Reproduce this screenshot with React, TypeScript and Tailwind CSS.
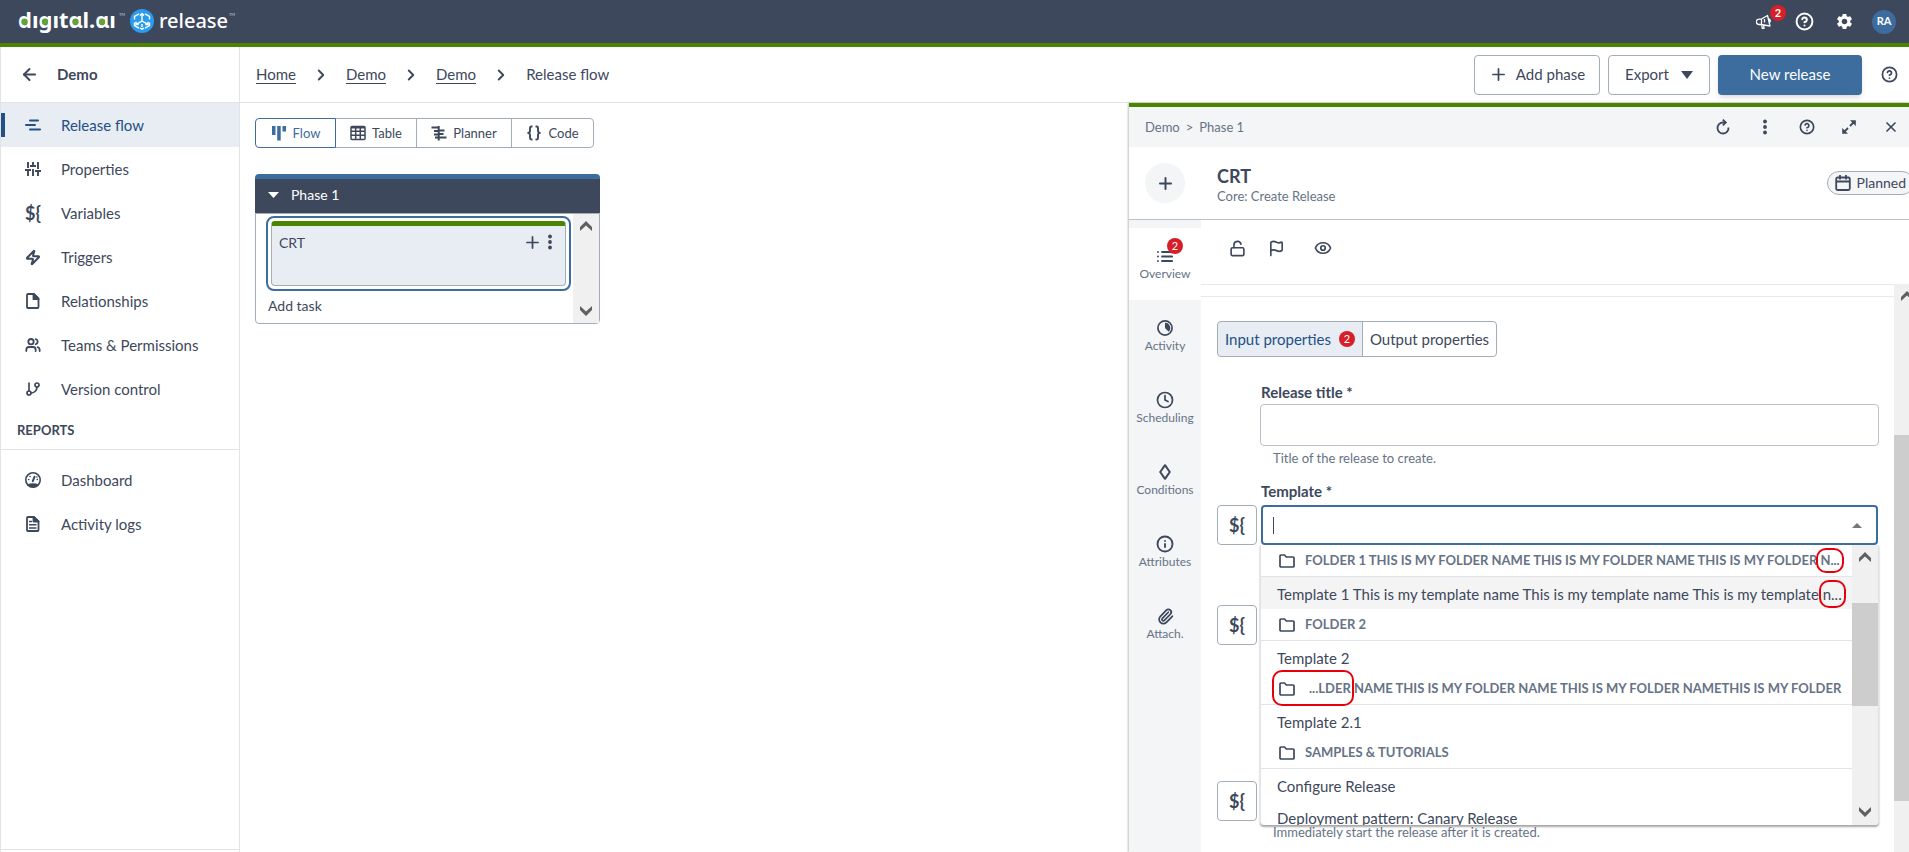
import React from 'react';
import clsx from 'clsx';
import {
  ArrowLeft,
  ChevronRight,
  CircleHelp,
  Eye,
  Flag,
  GitBranch,
  Info,
  Clock,
  LockOpen,
  Paperclip,
  Plus,
  Users,
  X,
  Zap,
} from 'lucide-react';
import { MdSettings } from 'react-icons/md';

type IconProps = { className?: string };

/* ---------- icons ---------- */

const FlowIcon = ({ className = 'size-4' }: IconProps) => (
  <svg viewBox="0 0 16 16" className={className} fill="none" stroke="currentColor" strokeWidth="2" strokeLinecap="round" aria-hidden="true">
    <path d="M5 3.5h8M1 8h9M5 12.5h10" />
  </svg>
);

const SlidersIcon = ({ className = 'size-4' }: IconProps) => (
  <svg viewBox="0 0 16 16" className={className} fill="none" stroke="currentColor" strokeWidth="1.9" aria-hidden="true">
    <path d="M3 1v6M0 9h6M3 9v6M8 1v4M5 5h6M8 8v7M13 1v7M10 10h6M13 10v5" />
  </svg>
);

const VariableIcon = () => (
  <span className="w-4 text-center text-lg leading-4 font-bold" aria-hidden="true">{'${'}</span>
);

const FileIcon = ({ className = 'size-4' }: IconProps) => (
  <svg viewBox="0 0 16 16" className={className} fill="none" stroke="currentColor" strokeWidth="1.8" strokeLinejoin="round" aria-hidden="true">
    <path d="M2 2v12a1 1 0 0 0 1 1h9.500a1 1 0 0 0 1-1V5.500L9 1H3a1 1 0 0 0-1 1z" />
    <path d="M8.500 1v5.200h5z" fill="currentColor" />
  </svg>
);

const LogIcon = ({ className = 'size-4' }: IconProps) => (
  <svg viewBox="0 0 16 16" className={className} fill="none" stroke="currentColor" strokeWidth="1.8" strokeLinejoin="round" aria-hidden="true">
    <path d="M2 2v12a1 1 0 0 0 1 1h9.500a1 1 0 0 0 1-1V5.500L9 1H3a1 1 0 0 0-1 1z" />
    <path d="M8.500 1v4.500h5z" fill="currentColor" />
    <path d="M4 5.500h3M4 8.800h7.500M4 12h7.500" strokeWidth="1.4" />
  </svg>
);

const GaugeIcon = ({ className = 'size-4' }: IconProps) => (
  <svg viewBox="0 0 16 16" className={className} fill="none" stroke="currentColor" strokeWidth="1.6" strokeLinecap="round" aria-hidden="true">
    <circle cx="8" cy="8" r="7.200" />
    <path d="M3.300 13c1.500-1.300 7.900-1.300 9.400 0-2.300 2.200-7.100 2.200-9.400 0z" fill="currentColor" />
    <path d="M7.800 9.200 9.500 4.800" strokeWidth="2" />
    <path d="M3.600 7.500h.2M12.200 7.500h.2M5 4.500h.2M11.800 5h.1" strokeWidth="1.5" />
  </svg>
);

const KanbanIcon = ({ className = 'size-4' }: IconProps) => (
  <svg viewBox="0 0 16 16" className={className} fill="currentColor" aria-hidden="true">
    <path d="M1 1h3.500v9H1zM6.200 1h3.500v14.500H6.200zM11.500 1H15v5.500h-3.500z" />
  </svg>
);

const TableIcon = ({ className = 'size-4' }: IconProps) => (
  <svg viewBox="0 0 16 16" className={className} fill="none" stroke="currentColor" strokeWidth="1.5" aria-hidden="true">
    <rect x="1" y="1.500" width="14" height="13" rx="1" />
    <path d="M1 2.500h14" strokeWidth="2" />
    <path d="M1 6.300h14M1 10.300h14M5.700 2v12.500M10.300 2v12.500" />
  </svg>
);

const PlannerIcon = ({ className = 'size-4' }: IconProps) => (
  <svg viewBox="0 0 16 16" className={className} fill="none" stroke="currentColor" strokeWidth="2" aria-hidden="true">
    <path d="M.5 2.500H7M3 6h5M3 9.500h5M8 5.500h5.500M8 9h4.500M8 12.500h7.500M4 12.500h3" />
    <path d="M7.700 1v14.500" />
  </svg>
);

const BracesIcon = ({ className = 'size-4' }: IconProps) => (
  <svg viewBox="0 0 16 16" className={className} fill="none" stroke="currentColor" strokeWidth="1.900" aria-hidden="true">
    <path d="M6.500 1.500H5.300Q4 1.500 4 3v3Q4 7.700 1.500 7.900 4 8.200 4 9.700V13q0 1.500 1.300 1.500h1.200M9.500 1.500h1.200Q12 1.500 12 3v3q0 1.700 2.500 1.900Q12 8.200 12 9.700V13q0 1.500-1.300 1.500H9.500" />
  </svg>
);

const MegaphoneIcon = ({ className = 'size-4' }: IconProps) => (
  <svg viewBox="0 0 16 16" className={className} fill="none" stroke="currentColor" strokeWidth="1.300" strokeLinejoin="round" aria-hidden="true">
    <path d="M5 5.200 11.500 1.500 14 12 5 10.500H3a2.600 2.600 0 0 1 0-5.300zM5.500 5v5.500M5.500 10.700l.8 3.600h1.800l-.6-3.200M8.500 5v3.500M13 4.700q1.800 1 1 3.600" />
  </svg>
);

const RefreshIcon = ({ className = 'size-4' }: IconProps) => (
  <svg viewBox="0 0 16 16" className={className} fill="none" stroke="currentColor" strokeWidth="1.800" aria-hidden="true">
    <path d="M13.500 8.500a5.500 5.500 0 1 1-5.500-5h2.500" />
    <path d="M7.800.7 10.800 3.500 7.800 6.300" />
  </svg>
);

const KebabIcon = ({ className = 'size-4' }: IconProps) => (
  <svg viewBox="0 0 16 16" className={className} fill="currentColor" aria-hidden="true">
    <circle cx="8" cy="2.500" r="1.900" />
    <circle cx="8" cy="8" r="1.900" />
    <circle cx="8" cy="13.500" r="1.900" />
  </svg>
);

const ExpandIcon = ({ className = 'size-4' }: IconProps) => (
  <svg viewBox="0 0 16 16" className={className} fill="currentColor" stroke="currentColor" aria-hidden="true">
    <path d="M9 1.200h5.800V7zM1.200 9v5.800H7z" stroke="none" />
    <path d="m9 7 4-4M7 9l-4 4" strokeWidth="1.800" />
  </svg>
);

const ListIcon = ({ className = 'size-4' }: IconProps) => (
  <svg viewBox="0 0 16 16" className={className} fill="none" stroke="currentColor" strokeWidth="1.800" strokeLinecap="round" aria-hidden="true">
    <path d="M5 4h10.200M5 8.500h10.200M5 13h10.200M.9 4H1M.9 8.500H1M.9 13H1" />
  </svg>
);

const ActivityIcon = ({ className = 'size-4' }: IconProps) => (
  <svg viewBox="0 0 16 16" className={className} fill="none" stroke="currentColor" strokeWidth="1.700" aria-hidden="true">
    <circle cx="8" cy="8" r="7.100" />
    <path d="M8 2.800A5.200 5.200 0 0 1 11.700 11.700L8 8z" fill="currentColor" stroke="none" />
  </svg>
);

const ConditionIcon = ({ className = 'size-4' }: IconProps) => (
  <svg viewBox="0 0 16 16" className={className} fill="none" stroke="currentColor" strokeWidth="2" strokeLinejoin="round" aria-hidden="true">
    <path d="M8 1.200 12.800 8 8 14.800 3.200 8z" />
  </svg>
);

const FolderIcon = ({ className = 'size-4' }: IconProps) => (
  <svg viewBox="0 0 16 16" className={className} fill="none" stroke="currentColor" strokeWidth="1.700" strokeLinejoin="round" aria-hidden="true">
    <path d="M1 3a1 1 0 0 1 1-1h3.500l1.800 2H14a1 1 0 0 1 1 1v8a1 1 0 0 1-1 1H2a1 1 0 0 1-1-1z" />
  </svg>
);

const CalendarIcon = ({ className = 'size-4' }: IconProps) => (
  <svg viewBox="0 0 16 16" className={className} fill="none" stroke="currentColor" strokeWidth="1.800" aria-hidden="true">
    <rect x="1.200" y="2.500" width="13.600" height="12.500" rx="1.500" />
    <path d="M1.500 6.500h13M5 0v4.500M11 0v4.500" />
  </svg>
);

const CaretDown = ({ className }: IconProps) => (
  <svg viewBox="0 0 12 8" preserveAspectRatio="none" className={className} fill="currentColor" aria-hidden="true">
    <path d="M0 0h12L6 8z" />
  </svg>
);

const ScrollArrow = ({ className }: IconProps) => (
  <svg viewBox="0 0 12 10" className={clsx('h-[10px] w-3 shrink-0 text-[#606060]', className)} fill="currentColor" aria-hidden="true">
    <path d="M6 0 12 6v4L6 4.500 0 10V6z" />
  </svg>
);

const Count = ({ value, className }: { value: number; className?: string }) => (
  <span className={clsx('flex size-4 items-center justify-center rounded-full bg-[#d61f26] text-[11px] leading-4 text-white', className)}>
    {value}
  </span>
);

/* ---------- header ---------- */

const Logo = () => (
  <svg viewBox="0 0 220 40" className="h-10 w-[220px]" role="img" aria-label="digital.ai release">
    <text x="0" y="26" fill="#fff" fontFamily="'Noto Sans', sans-serif" fontSize="22" fontWeight="700">dıgıtɑl.ɑı</text>
    <g fill="#64a338">
      <circle cx="6.500" cy="19.800" r="3.200" />
      <circle cx="27" cy="19.800" r="3.200" />
      <circle cx="57.500" cy="19.800" r="3.200" />
      <circle cx="84" cy="19.800" r="3.200" />
    </g>
    <circle cx="124" cy="19" r="12" fill="#2b9ced" />
    <g fill="none" stroke="#fff" strokeWidth="1.400">
      <path d="M124 12v7l-5.500 3.200M124 19l5.500 3.200M122 13.500l2-2 2 2M118 19.800v2.700h2.700M130 19.800v2.700h-2.700" />
      <path d="M121 11.800l-4.500 2.600v3.200M127 11.800l4.500 2.600v3.200M116.500 20.500v3.100l4.500 2.600M131.500 20.500v3.100l-4.500 2.600M122 26l2 1.200 2-1.200M124 22v3" />
    </g>
    <text x="141" y="26" fill="#fff" fontFamily="'Noto Sans', sans-serif" fontSize="20" fontWeight="500">release</text>
    <text x="101" y="14" fill="#c5cbd3" fontFamily="Lato, sans-serif" fontSize="4">TM</text>
    <text x="211" y="14" fill="#c5cbd3" fontFamily="Lato, sans-serif" fontSize="4">TM</text>
  </svg>
);

const Header = () => (
  <header className="flex h-[47px] shrink-0 items-center justify-between border-b-4 border-[#498500] bg-[#3d485c] pr-[13px] pl-[18px] text-white">
    <Logo />
    <div className="flex items-center gap-4">
      <button aria-label="Announcements" className="relative flex size-6 items-center justify-center">
        <MegaphoneIcon />
        <Count value={2} className="absolute -top-[5px] left-[18px] font-bold" />
      </button>
      <button aria-label="Help" className="flex size-6 items-center justify-center">
        <CircleHelp size={19} strokeWidth={2.5} />
      </button>
      <button aria-label="Settings" className="flex size-6 items-center justify-center">
        <MdSettings size={19} />
      </button>
      <button aria-label="Account" className="flex size-6 items-center justify-center rounded-full bg-[#3d6c9e] text-[11px] font-bold">
        RA
      </button>
    </div>
  </header>
);

/* ---------- sidebar ---------- */

const mainItems = [
  { label: 'Release flow', icon: <FlowIcon />, active: true },
  { label: 'Properties', icon: <SlidersIcon /> },
  { label: 'Variables', icon: <VariableIcon /> },
  { label: 'Triggers', icon: <Zap size={17} strokeWidth={3} /> },
  { label: 'Relationships', icon: <FileIcon /> },
  { label: 'Teams & Permissions', icon: <Users size={18} strokeWidth={2.7} /> },
  { label: 'Version control', icon: <GitBranch size={20} strokeWidth={2.5} /> },
];

const reportItems = [
  { label: 'Dashboard', icon: <GaugeIcon /> },
  { label: 'Activity logs', icon: <LogIcon /> },
];

const NavItem = ({ label, icon, active }: { label: string; icon: React.ReactNode; active?: boolean }) => (
  <li>
    <a href="#" className={clsx('flex h-11 items-center text-[15px]', active && 'bg-[#e8edf3] text-[#235086]')}>
      <span className={clsx('h-6 w-1', active && 'bg-[#235086]')} />
      <span className="ml-5 flex w-4 justify-center">{icon}</span>
      <span className="ml-5">{label}</span>
    </a>
  </li>
);

const Sidebar = () => (
  <nav className="flex w-60 shrink-0 flex-col border-x border-[#e1e3e8]">
    <div className="flex h-14 shrink-0 items-center border-b border-[#e1e3e8] pl-[19px]">
      <a href="#" aria-label="Back"><ArrowLeft size={19} strokeWidth={2.5} /></a>
      <span className="ml-[18px] text-[15px] font-bold">Demo</span>
    </div>
    <ul>
      {mainItems.map((item) => <NavItem key={item.label} {...item} />)}
    </ul>
    <h2 className="h-[39px] border-b border-[#e1e3e8] pl-4 text-[13px] leading-[39px] font-bold">REPORTS</h2>
    <ul className="mt-2">
      {reportItems.map((item) => <NavItem key={item.label} {...item} />)}
    </ul>
    <div className="mt-auto mb-[2px] border-b border-[#e1e3e8]" />
  </nav>
);

/* ---------- release flow ---------- */

const Toolbar = () => (
  <div className="flex h-14 shrink-0 items-center justify-between border-b border-[#e1e3e8] pr-[11px] pl-4 text-[15px]">
    <nav aria-label="Breadcrumb" className="flex items-center">
      {['Home', 'Demo', 'Demo'].map((crumb, i) => (
        <React.Fragment key={i}>
          <a href="#" className="border-b border-current leading-[18px]">{crumb}</a>
          <ChevronRight size={18} strokeWidth={2.5} className="mx-4" />
        </React.Fragment>
      ))}
      <span>Release flow</span>
    </nav>
    <div className="flex items-center gap-2">
      <button className="flex h-10 w-[126px] items-center justify-center gap-2 rounded-[4px] border border-[#a3adb8]">
        <Plus size={19} strokeWidth={2.2} />
        Add phase
      </button>
      <button className="flex h-10 w-[102px] items-center justify-center gap-3 rounded-[4px] border border-[#a3adb8]">
        Export
        <CaretDown className="h-2 w-3" />
      </button>
      <button className="h-10 w-36 rounded-[4px] bg-[#3d6c9e] text-white shadow-md">New release</button>
      <button aria-label="Help" className="ml-[11px]">
        <CircleHelp size={17} strokeWidth={2.5} />
      </button>
    </div>
  </div>
);

const views = [
  { label: 'Flow', icon: <KanbanIcon />, width: 'w-[81px]' },
  { label: 'Table', icon: <TableIcon />, width: 'w-[82px]' },
  { label: 'Planner', icon: <PlannerIcon />, width: 'w-[96px]' },
  { label: 'Code', icon: <BracesIcon />, width: 'w-[83px]' },
];

const FlowArea = () => (
  <main className="min-w-0 flex-1 pt-[15px] pl-[15px]">
    <div className="flex text-[13px]">
      {views.map(({ label, icon, width }, i) => (
        <button
          key={label}
          className={clsx(
            'flex h-[30px] items-center justify-center gap-[6px] border',
            width,
            i === 0 ? 'z-10 rounded-l-[4px] border-[#3d6c9e] text-[#3d6c9e]' : '-ml-px border-[#a3adb8]',
            i === views.length - 1 && 'rounded-r-[4px]',
          )}
        >
          {icon}
          <span className="pt-[2px]">{label}</span>
        </button>
      ))}
    </div>

    <section className="mt-[26px] w-[345px]">
      <h2 className="flex h-[39px] items-center rounded-t-[4px] border-t-5 border-[#3d6c9e] bg-[#3d485c] pb-[2px] pl-[13px] text-sm text-white">
        <CaretDown className="mr-3 h-[6px] w-[11px]" />
        Phase 1
      </h2>
      <div className="flex h-[111px] rounded-b-[4px] border border-[#a3adb8] text-sm">
        <div className="min-w-0 flex-1 pt-[2px] pl-[10px]">
          <div className="mr-[2px] rounded-lg border-2 border-[#3d6c9e] p-[3px]">
            <div className="flex h-[65px] items-start rounded-[4px] border border-t-5 border-[#a3adb8] border-t-[#498500] bg-[#e8edf3] px-[7px] pt-[7px]">
              <span className="flex-1">CRT</span>
              <button aria-label="Add"><Plus size={19} strokeWidth={2.2} /></button>
              <button aria-label="Task menu" className="mt-px"><KebabIcon /></button>
            </div>
          </div>
          <button className="mt-[3px] ml-[2px] leading-6">Add task</button>
        </div>
        <div className="flex w-[26px] flex-col items-center justify-between bg-[#f0f0f0] py-[7px]">
          <ScrollArrow />
          <ScrollArrow className="rotate-180" />
        </div>
      </div>
    </section>
  </main>
);

/* ---------- task panel ---------- */

const panelTabs = [
  { label: 'Overview', icon: <ListIcon />, count: 2 },
  { label: 'Activity', icon: <ActivityIcon /> },
  { label: 'Scheduling', icon: <Clock size={18} strokeWidth={2.3} /> },
  { label: 'Conditions', icon: <ConditionIcon /> },
  { label: 'Attributes', icon: <Info size={18} strokeWidth={2.5} /> },
  { label: 'Attach.', icon: <Paperclip size={17} strokeWidth={2.5} /> },
];

type Option = { label: string; tail?: string; group?: boolean; head?: string; hover?: boolean };

const options: Option[] = [
  { group: true, label: 'FOLDER 1 THIS IS MY FOLDER NAME THIS IS MY FOLDER NAME THIS IS MY FOLDER ', tail: 'N...' },
  { label: 'Template 1 This is my template name This is my template name This is my template ', tail: 'n...', hover: true },
  { group: true, label: 'FOLDER 2' },
  { label: 'Template 2' },
  { group: true, head: '...LDER ', label: 'NAME THIS IS MY FOLDER NAME THIS IS MY FOLDER NAMETHIS IS MY FOLDER' },
  { label: 'Template 2.1' },
  { group: true, label: 'SAMPLES & TUTORIALS' },
  { label: 'Configure Release' },
  { label: 'Deployment pattern: Canary Release' },
];

const OptionRow = ({ label, tail, group, head, hover }: Option) => (
  <li
    role={group ? 'presentation' : 'option'}
    aria-selected={group ? undefined : false}
    className={clsx(
      'relative flex h-8 items-center whitespace-pre',
      group ? 'border-b border-[#e1e3e8] pl-[18px] text-[13px] font-bold text-[#667385]' : 'pt-[2px] pl-4 text-[15px]',
      hover && 'bg-[#f4f4f4]',
    )}
  >
    {group && <FolderIcon className="mr-[10px] size-4 shrink-0 text-[#3d485c]" />}
    {head && <span className="pl-1">{head}</span>}
    {label}
    {tail && (
      <span className="relative">
        {tail}
        <span className="absolute -inset-x-1 -inset-y-[3px] rounded-[10px] border-2 border-red-600" />
      </span>
    )}
    {head && <span className="absolute -top-[3px] left-[11px] h-9 w-[82px] rounded-[10px] border-2 border-red-600" />}
  </li>
);

const TemplateList = () => (
  <div className="absolute top-[38px] -right-[3px] -left-[3px] z-10 flex h-[280px] overflow-hidden rounded-b-[4px] border-x border-[#e1e3e8] bg-white shadow-[0_2px_2px_rgba(0,0,0,0.35)]">
    <ul role="listbox" id="template-list" aria-label="Template" className="min-w-0 flex-1">
      {options.map((option) => <OptionRow key={option.label} {...option} />)}
    </ul>
    <div className="flex w-[26px] flex-col items-center bg-[#f0f0f0] pt-[7px] pb-2">
      <ScrollArrow />
      <div className="mt-[41px] h-[103px] w-full bg-[#cdcdcd]" />
      <ScrollArrow className="mt-auto rotate-180" />
    </div>
  </div>
);

const VariableButton = () => (
  <button type="button" aria-label="Use variable" className="flex size-10 shrink-0 items-center justify-center rounded-[4px] border border-[#a3adb8]">
    <VariableIcon />
  </button>
);

const TaskPanel = () => (
  <aside className="flex w-[780px] shrink-0 overflow-hidden shadow-[-1px_0_2px_rgba(0,0,0,0.25)]">
    {/* runs a little past the window edge, the overflow is clipped */}
    <div className="flex w-[791px] shrink-0 flex-col border-t-4 border-[#498500] bg-white">
      <div className="flex h-10 shrink-0 items-center justify-between bg-[#f3f5f7] pr-[21px] pl-4 text-[13px] text-[#667385]">
        <span className="flex gap-[6px] pt-[2px]"><a href="#">Demo</a><span>&gt;</span><a href="#">Phase 1</a></span>
        <span className="flex gap-[26px] text-[#3d485c]">
          <button aria-label="Refresh"><RefreshIcon /></button>
          <button aria-label="More"><KebabIcon /></button>
          <button aria-label="Help"><CircleHelp size={16} strokeWidth={2.5} /></button>
          <button aria-label="Expand"><ExpandIcon /></button>
          <button aria-label="Close"><X size={16} strokeWidth={2.5} /></button>
        </span>
      </div>

      <div className="flex h-[73px] shrink-0 items-center border-b border-[#bcc2cb] pr-[6px] pl-4">
        <button aria-label="Change task type" className="flex size-10 items-center justify-center rounded-full bg-[#f3f5f7]">
          <Plus size={19} strokeWidth={2.5} />
        </button>
        <div className="ml-8 flex-1 pt-[5px]">
          <h1 className="text-lg leading-5 font-bold">CRT</h1>
          <p className="text-[13px] leading-5 text-[#667385]">Core: Create Release</p>
        </div>
        <span className="flex h-6 items-center gap-[6px] rounded-full border border-[#a3adb8] bg-[#f3f5f7] px-[7px] text-sm">
          <CalendarIcon />
          Planned
        </span>
      </div>

      <div className="flex min-h-0 flex-1">
        <ul className="w-[72px] shrink-0 bg-[#f3f5f7] pt-2">
          {panelTabs.map(({ label, icon, count }) => (
            <li key={label}>
              <button className={clsx('relative flex h-[72px] w-full flex-col items-center pt-[19px] text-xs leading-[18px] text-[#667385]', count && 'bg-white')}>
                <span className="flex h-[18px] items-center text-[#3d485c]">{icon}</span>
                {label}
                {count && <Count value={count} className="absolute top-[10px] left-[38px]" />}
              </button>
            </li>
          ))}
        </ul>

        <div className="flex min-w-0 flex-1 flex-col">
          <div className="flex h-16 shrink-0 items-center pb-2 pl-7 text-[#3d485c]">
            <button aria-label="Lock task"><LockOpen size={17} strokeWidth={2.3} /></button>
            <button aria-label="Flag" className="ml-[22px]"><Flag size={17} strokeWidth={2.3} /></button>
            <button aria-label="Watch" className="ml-[29px]"><Eye size={18} strokeWidth={2.3} /></button>
          </div>

          <div className="flex min-h-0 flex-1">
            <form className="min-w-0 flex-1 overflow-hidden border-t border-[#e6e8eb] pt-[11px]">
              <div className="border-t border-[#e6e8eb] pt-6 pr-[15px] pl-4">
                <div className="flex text-[15px]">
                  <button type="button" className="flex h-9 w-[146px] items-center justify-between rounded-l-[4px] border border-[#a3adb8] bg-[#e8edf3] px-[7px] text-[#235086]">
                    Input properties
                    <Count value={2} />
                  </button>
                  <button type="button" className="-ml-px h-9 w-[135px] rounded-r-[4px] border border-[#a3adb8]">Output properties</button>
                </div>

                <div className="mt-[23px] pl-[43px]">
                  <label htmlFor="release-title" className="block pl-px text-[15px] leading-6 font-bold">Release title *</label>
                  <input id="release-title" type="text" className="h-[42px] w-full rounded-[4px] border border-[#bcc2cb] px-3 outline-none" />
                  <p className="pl-[13px] text-[13px] leading-6 text-[#667385]">Title of the release to create.</p>
                </div>

                <label htmlFor="template" className="mt-[9px] mb-[2px] block pl-11 text-[15px] leading-6 font-bold">Template *</label>
                <div className="flex gap-1">
                  <VariableButton />
                  <div className="relative mr-px flex h-10 flex-1 items-center rounded-[4px] border-2 border-[#3d6c9e] pr-[14px] pl-[10px]">
                    <span className="h-[17px] w-px bg-[#3d485c]" />
                    <input id="template" role="combobox" aria-expanded="true" aria-controls="template-list" type="text" className="min-w-0 flex-1 outline-none" />
                    <CaretDown className="h-[5px] w-[10px] rotate-180 text-[#767676]" />
                    <TemplateList />
                  </div>
                </div>

                <div className="mt-[60px]"><VariableButton /></div>
                <div className="mt-[136px]"><VariableButton /></div>
                <p className="pl-14 text-[13px] leading-[22px] text-[#667385]">Immediately start the release after it is created.</p>
              </div>
            </form>

            <div className="flex w-[26px] shrink-0 flex-col items-center bg-[#f0f0f0] pt-[7px]">
              <ScrollArrow />
              <div className="mt-[134px] h-[366px] w-full shrink-0 bg-[#cdcdcd]" />
            </div>
          </div>
        </div>
      </div>
    </div>
  </aside>
);

const App = () => {
  return (
    <div className="flex h-screen flex-col overflow-hidden bg-white font-[Lato,'Noto_Sans',sans-serif] text-[#3d485c]">
      <Header />
      <div className="flex min-h-0 flex-1">
        <Sidebar />
        <div className="flex min-w-0 flex-1 flex-col">
          <Toolbar />
          <div className="flex min-h-0 flex-1">
            <FlowArea />
            <TaskPanel />
          </div>
        </div>
      </div>
    </div>
  );
};

export default App;
